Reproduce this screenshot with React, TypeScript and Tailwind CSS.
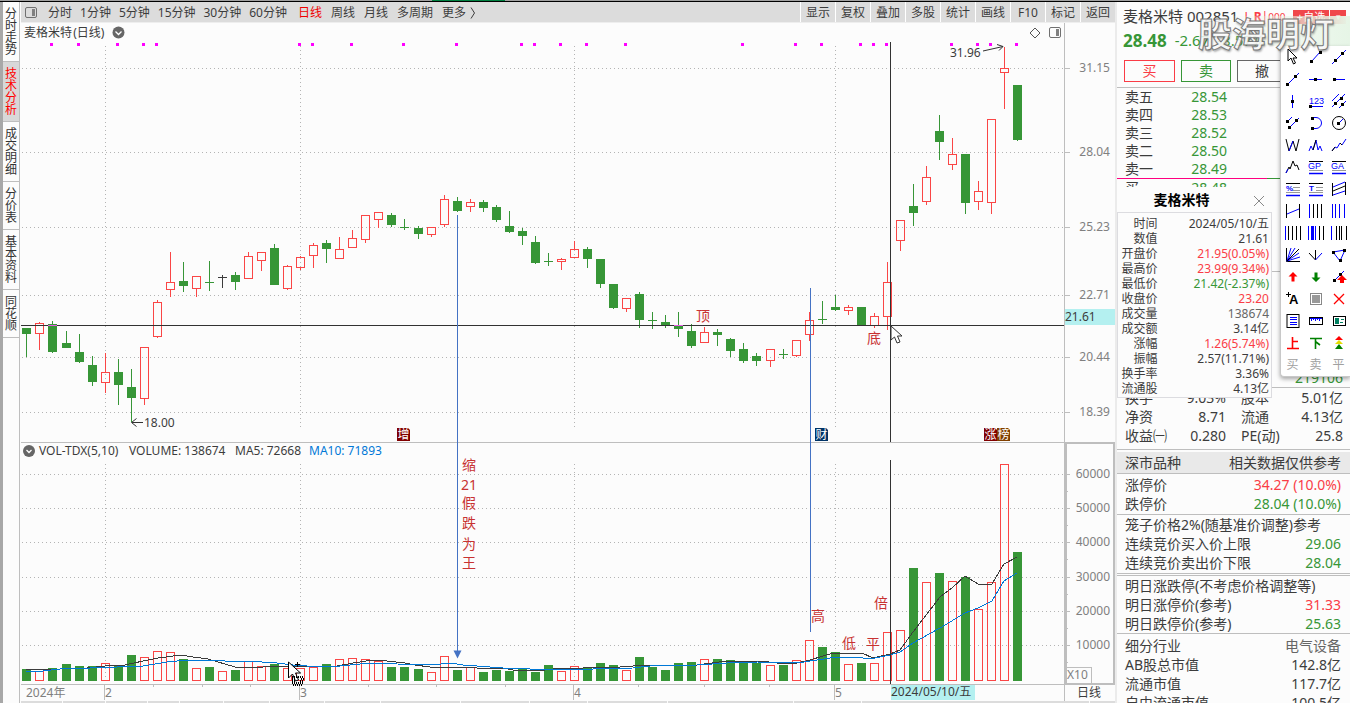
import React from "react";

type Kind = "r" | "g" | "k";
// [centre x, body top, body bottom, high, low, kind, volume top]
type Bar = [number, number, number, number, number, Kind, number];

const bars: Bar[] = [
  [26, 328, 334, 328, 357, "g", 669],
  [39, 323, 334, 322, 350, "r", 671],
  [52, 324, 352, 321, 353, "g", 668],
  [66, 343, 348, 331, 348, "g", 664],
  [79, 352, 362, 334, 363, "g", 666],
  [92, 365, 382, 356, 386, "g", 666],
  [105, 372, 383, 353, 393, "r", 663],
  [118, 372, 385, 359, 405, "g", 665],
  [131, 387, 398, 369, 422, "g", 655],
  [144, 347, 399, 347, 405, "r", 657],
  [157, 302, 337, 300, 338, "r", 651],
  [170, 282, 290, 252, 297, "r", 652],
  [183, 281, 286, 262, 292, "g", 659],
  [196, 276, 289, 276, 297, "r", 668],
  [209, 282, 283, 261, 291, "g", 667],
  [222, 277, 278, 275, 288, "k", 671],
  [235, 275, 282, 272, 290, "g", 670],
  [248, 256, 279, 252, 279, "r", 661],
  [261, 252, 261, 252, 271, "r", 666],
  [274, 248, 285, 244, 285, "g", 664],
  [287, 266, 289, 265, 290, "r", 668],
  [300, 257, 268, 256, 270, "r", 668],
  [313, 245, 256, 243, 268, "r", 667],
  [326, 243, 249, 240, 263, "g", 664],
  [339, 249, 259, 237, 259, "r", 659],
  [352, 238, 248, 230, 248, "r", 658],
  [365, 215, 240, 215, 243, "r", 659],
  [378, 212, 220, 212, 228, "r", 661],
  [391, 215, 225, 213, 227, "g", 667],
  [404, 227, 228, 219, 230, "g", 667],
  [418, 228, 234, 226, 239, "g", 669],
  [431, 227, 235, 227, 237, "r", 672],
  [444, 199, 225, 195, 227, "r", 656],
  [457, 201, 211, 197, 212, "g", 670],
  [470, 202, 207, 199, 212, "r", 667],
  [483, 202, 208, 200, 212, "g", 672],
  [496, 207, 220, 205, 222, "g", 670],
  [509, 226, 232, 211, 233, "g", 671],
  [522, 231, 236, 228, 245, "g", 669],
  [535, 242, 263, 236, 264, "g", 672],
  [548, 261, 262, 253, 266, "g", 665],
  [561, 259, 262, 258, 270, "r", 671],
  [574, 249, 258, 241, 258, "r", 666],
  [587, 249, 259, 247, 268, "g", 667],
  [600, 259, 284, 259, 288, "g", 663],
  [613, 284, 308, 284, 309, "g", 665],
  [626, 298, 309, 298, 312, "r", 670],
  [639, 294, 320, 292, 328, "g", 657],
  [652, 320, 321, 312, 329, "g", 667],
  [665, 322, 326, 315, 328, "g", 670],
  [678, 325, 329, 312, 337, "g", 663],
  [691, 331, 346, 324, 348, "g", 662],
  [704, 332, 343, 327, 343, "r", 659],
  [717, 332, 335, 329, 346, "g", 659],
  [730, 339, 351, 338, 357, "g", 660],
  [743, 349, 361, 343, 363, "g", 663],
  [756, 356, 361, 353, 366, "g", 663],
  [770, 349, 361, 349, 367, "r", 665],
  [783, 354, 355, 349, 359, "g", 665],
  [796, 340, 356, 340, 357, "r", 660],
  [809, 320, 335, 312, 341, "r", 640],
  [822, 319, 320, 301, 324, "g", 647],
  [835, 307, 310, 295, 311, "g", 652],
  [848, 307, 311, 305, 315, "r", 664],
  [861, 307, 325, 307, 326, "g", 663],
  [874, 316, 326, 313, 328, "r", 663],
  [887, 282, 317, 262, 330, "r", 632],
  [900, 220, 241, 220, 251, "r", 630],
  [913, 206, 213, 184, 226, "g", 568],
  [926, 177, 202, 166, 205, "r", 582],
  [939, 131, 142, 115, 160, "g", 573],
  [952, 154, 165, 138, 170, "r", 581],
  [965, 154, 203, 154, 214, "g", 577],
  [978, 191, 202, 181, 210, "r", 609],
  [991, 119, 203, 119, 214, "r", 582],
  [1004, 68, 73, 47, 109, "r", 464],
  [1017, 85, 140, 85, 141, "g", 552],
];

const colors: Record<Kind, string> = { r: "#fa4646", g: "#379637", k: "#3c3c3c" };
const VOL_BASE = 681;

const signalDots = [50, 77, 116, 142, 155, 298, 311, 350, 402, 455, 520, 533, 559, 585, 624, 741, 794, 820, 859, 872, 885, 950, 976, 989, 1015];
const priceTicks: [number, string][] = [[68, "31.15"], [152, "28.04"], [227, "25.23"], [295, "22.71"], [357, "20.44"], [412, "18.39"]];
const volumeTicks: [number, string][] = [[474, "60000"], [508, "50000"], [542, "40000"], [577, "30000"], [611, "20000"], [645, "10000"]];
const months: [number, string][] = [[105, "2"], [300, "3"], [574, "4"], [835, "5"]];
const weekTicks = [153, 202, 250, 368, 436, 505, 638, 704, 769];

const ma5 =
  "26,669 45,670 60,669 87,668 105,666 125,665 143,661 158,658 181,655 193,657 208,659 235,667 263,667 287,666 317,667 337,666 353,663 373,660 387,661 405,663 415,665 430,667 450,667 477,668 503,668 513,670 537,671 553,669 583,668 597,667 620,667 647,665 663,666 697,665 727,661 760,661 777,663 797,663 810,660 823,656 833,653 862,653 873,658 890,654 900,650 913,632 940,597 952,588 965,576 978,584 992,584 1004,564 1017,557";
const ma10 =
  "26,672 43,671 60,669 90,668 117,667 143,666 167,662 187,660 217,660 233,662 247,661 277,663 293,665 320,667 340,666 370,663 397,664 433,665 450,663 463,665 490,667 503,668 530,669 593,669 633,668 650,666 697,665 727,663 757,662 797,663 817,660 837,657 863,658 875,658 890,655 900,652 913,643 940,628 965,613 978,608 992,601 1004,581 1017,573";

const notes: [number, number, string][] = [
  [703, 321, "顶"], [874, 343, "底"], [818, 621, "高"], [849, 648, "低"], [873, 649, "平"], [881, 608, "倍"],
  [469, 470, "缩"], [469, 490, "21"], [469, 508, "假"], [469, 528, "跌"], [469, 549, "为"], [469, 568, "王"],
];
const tags: [number, string, string][] = [[397, "增", "#800000"], [815, "财", "#003366"], [984, "涨", "#800000"], [997, "榜", "#804000"]];

function StockChart() {
  return (
    <svg viewBox="21 42 1094 659" className="block h-auto w-full" role="img" aria-label="日线 K线图" fontSize="12">
      <g stroke="#b4b4b4" strokeDasharray="1 3" shapeRendering="crispEdges">
        {[...priceTicks, ...volumeTicks].map(([y]) => (
          <line key={y} x1="22" x2="1064" y1={y + 0.5} y2={y + 0.5} />
        ))}
        {months.map(([x]) => (
          <g key={x}>
            <line x1={x + 0.5} x2={x + 0.5} y1="46" y2="428" />
            <line x1={x + 0.5} x2={x + 0.5} y1="464" y2="681" />
          </g>
        ))}
      </g>
      <g shapeRendering="crispEdges" fill="none" stroke="#bebebe">
        <path d="M21 442.5H1115M1064.5 42V701M21 684.5H1115" />
        <rect x="1066" y="443" width="48" height="241" strokeWidth="2" />
        <path d="M1065 667.5H1091.5V683" />
        {priceTicks.map(([y]) => <path key={y} d={`M1065 ${y + 0.5}h5`} />)}
        {volumeTicks.map(([y]) => <path key={y} d={`M1066 ${y + 0.5}h4M1066 ${y + 17.5}h2`} />)}
        {months.map(([x]) => <path key={x} d={`M${x - 0.5} 685v15`} />)}
        {weekTicks.map((x) => <path key={x} d={`M${x + 0.5} 685v2`} />)}
      </g>
      <g shapeRendering="crispEdges">
        {signalDots.map((x) => <rect key={x} x={x} y="43" width="3" height="3" fill="#ff00ff" />)}
        {bars.map(([x, top, bottom, high, low, kind, vol]) => {
          const c = colors[kind];
          const volRed = kind !== "g";
          return (
            <g key={x} stroke={kind === "g" ? "none" : c}>
              <rect x={x} y={high} width="1" height={Math.max(0, (kind === "r" ? top : low) - high)} fill={c} stroke="none" />
              {kind === "r" ? (
                <>
                  <rect x={x} y={bottom} width="1" height={low - bottom} fill={c} stroke="none" />
                  <rect x={x - 3.5} y={top + 0.5} width="8" height={bottom - top - 1} fill="none" />
                </>
              ) : (
                <rect x={x - 4} y={top} width="9" height={bottom - top} fill={c} stroke="none" />
              )}
              {volRed ? (
                <rect x={x - 3.5} y={vol + 0.5} width="8" height={VOL_BASE - vol - 1} fill="none" stroke={colors.r} />
              ) : (
                <rect x={x - 4} y={vol} width="9" height={VOL_BASE - vol} fill={c} />
              )}
            </g>
          );
        })}
      </g>
      <g fill="none" shapeRendering="crispEdges">
        <polyline points={ma5} stroke="#3c3c3c" />
        <polyline points={ma10} stroke="#0078d7" />
        <path d="M21 325.5H1064M890.5 42V442M890.5 460V684" stroke="#323232" />
        <path d="M48 325.5h9M674 325.5h9" stroke="#e65ae6" />
        <path d="M457.5 215V652M810.5 288V632" stroke="#4472c4" />
      </g>
      <path d="M453.500 650.500h8l-4 8z" fill="#4472c4" />
      <g fill="none" stroke="#323232">
        <path d="M983 51L1003 46.500M997 44.500L1003 46.500L999 50.500" />
        <path d="M143 422.500H132M136.500 418.500L131.500 422.500L136.500 426.500" />
      </g>
      <rect x="1065" y="309" width="50" height="16" fill="#b4f0f0" />
      <rect x="891" y="685" width="84" height="15" fill="#b4f0f0" />
      <g fill="#3c3c3c">
        <text x="1065" y="321">21.61</text>
        <text x="891" y="696">2024/05/10/五</text>
        <text x="1077" y="697">日线</text>
        <text x="950" y="57">31.96</text>
        <text x="144" y="427">18.00</text>
        <text x="39" y="455">VOL-TDX(5,10)</text>
        <text x="129" y="455">VOLUME: 138674</text>
        <text x="235" y="455">MA5: 72668</text>
        <text x="309" y="455" fill="#0078d7">MA10: 71893</text>
      </g>
      <g fill="#808080">
        {[...priceTicks, ...volumeTicks].map(([y, label]) => (
          <text key={label} x="1110" y={y + 4} textAnchor="end">{label}</text>
        ))}
        <text x="1067" y="679">X10</text>
        <text x="26" y="697">2024年</text>
        {months.map(([x, label]) => <text key={x} x={x} y="697">{label}</text>)}
      </g>
      <circle cx="29" cy="451" r="6" fill="#666" />
      <path d="M26.500 450l2.500 2.500l2.500 -2.500" fill="none" stroke="#fff" strokeWidth="1.300" />
      <g fill="#c83232" fontSize="14" textAnchor="middle">
        {notes.map(([x, y, t]) => <text key={t} x={x} y={y}>{t}</text>)}
      </g>
      {tags.map(([x, t, fill]) => (
        <g key={t}>
          <path d={`M${x} 428h11l2 2v11h-13z`} fill={fill} />
          <text x={x + 6.5} y="439" fontSize="12" fill="#fff" textAnchor="middle">{t}</text>
        </g>
      ))}
      <path d="M891 326v14l3.500 -3l2.500 6l3 -1l-2.500 -6h4.500z" fill="#fff" stroke="#333" />
      <g>
        <path d="M288.500 662v16l4 -4l3 7l3 -1l-3 -7h5z" fill="#fff" stroke="#000" />
        <path d="M297.500 662v5M295 664.500h5" stroke="#000" />
        <path d="M292 677h12M292 679h3M301 679h3M292 681h4M300 681h4M292 683h12M293 685h10" fill="none" stroke="#000" strokeDasharray="1 1" strokeWidth="2" />
      </g>
    </svg>
  );
}

const periodsShort = ["分时", "1分钟", "5分钟", "15分钟", "30分钟", "60分钟"];
const periodsLong = ["日线", "周线", "月线", "多周期", "更多"];
const actions = ["显示", "复权", "叠加", "多股", "统计", "画线", "F10", "标记", "返回"];
const sideTabs = ["分时走势", "技术分析", "成交明细", "分价表", "基本资料", "同花顺"];
const bottomTabs = [42, 42, 42, 31, 44, 45, 55, 56, 80, 69, 58, 80, 127, 67, 231, 25];

function PanelIcon() {
  return (
    <svg width="13" height="11" viewBox="0 0 13 11" aria-hidden="true">
      <rect x="0.500" y="0.500" width="11" height="10" rx="1.500" fill="none" stroke="#707070" />
      <rect x="7" y="2" width="3" height="7" fill="#808080" />
    </svg>
  );
}

function Toolbar() {
  return (
    <nav className="flex h-5 items-stretch bg-[#dcdcdc] text-xs leading-[22px] text-[#3c3c3c]">
      <button className="flex w-[27px] items-center pl-1" aria-label="侧栏"><PanelIcon /></button>
      <div className="flex gap-2">
        {periodsShort.map((p) => <button key={p}>{p}</button>)}
      </div>
      <div className="ml-[11px] flex gap-[9px]">
        {periodsLong.map((p) => (
          <button key={p} className={p === "日线" ? "text-[#f00000]" : ""}>{p}</button>
        ))}
      </div>
      <svg className="ml-1 mt-1" width="6" height="14" viewBox="0 0 6 14" fill="none" stroke="#3c3c3c" aria-hidden="true">
        <path d="M1 1.500L4.500 7L1 12.500" />
      </svg>
      <div className="ml-auto flex">
        {actions.map((a) => (
          <button key={a} className="w-[35px] border-l border-white">{a}</button>
        ))}
      </div>
    </nav>
  );
}

function ChartColumn() {
  return (
    <main className="flex min-w-0 flex-1 flex-col">
      <Toolbar />
      <div className="flex h-5 border-t border-[#eeeeee] text-xs text-[#3c3c3c]">
        <div className="flex flex-1 items-center gap-2 pl-[3px]">
          <h1 className="leading-5">麦格米特<span>&#8202;(日线)</span></h1>
          <button aria-label="展开">
            <svg width="13" height="13" viewBox="0 0 13 13">
              <circle cx="6.500" cy="6.500" r="6" fill="#666" />
              <path d="M3.500 5.500l3 3l3 -3" fill="none" stroke="#fff" strokeWidth="1.300" />
            </svg>
          </button>
          <button className="ml-auto" aria-label="标记点">
            <svg width="12" height="12" viewBox="0 0 12 12"><path d="M6 1l5 5l-5 5l-5 -5z" fill="none" stroke="#555" /></svg>
          </button>
          <button className="pr-[2px]" aria-label="面板"><PanelIcon /></button>
        </div>
        <div className="w-[51px] border-l border-[#bebebe]" />
      </div>
      <StockChart />
      <div className="flex h-[2px] gap-px">
        {bottomTabs.map((w, i) => <span key={i} className="bg-[#dcdcdc]" style={{ flexGrow: w }} />)}
      </div>
    </main>
  );
}

const K = "#000";
const B = "#0000ff";
const dot = (x: number, y: number) => <rect x={x - 1} y={y - 1} width="3" height="3" fill={K} />;
const vlines = (xs: [number, string, number?][]) => (
  <>{xs.map(([x, c, w], i) => <rect key={i} x={x} y="1" width={w ?? 1} height="14" fill={c} />)}</>
);
const textLines = (label: string) => (
  <>
    <path d="M1 2.500h14" stroke={K} />
    <path d="M1 14.500h14" stroke={B} strokeWidth="1.500" />
    {label.length === 2 ? (
      <>
        <path d="M1 11.500h14" stroke="#999" />
        <text x="0" y="10" fontSize="9" fill={B}>{label}</text>
      </>
    ) : (
      <>
        <path d="M8 6.500h7M8 9.500h7M1 11.500h14" stroke="#999" />
        <text x="1" y="10" fontSize="8" fontWeight="bold" fill={B}>{label}</text>
      </>
    )}
  </>
);

const tools: [string, React.ReactNode][] = [
  ["选择", <path d="M3 0v12l3 -3l2.500 6l2 -1l-2.500 -5h4z" fill="#fff" stroke={K} />],
  ["线段", <><path d="M4 12L12 3" stroke={B} />{dot(3, 12)}{dot(12, 3)}</>],
  ["直线", <><path d="M1 15L15 1" stroke={B} />{dot(4, 11)}{dot(11, 4)}</>],
  ["射线", <><path d="M1 15L14 2" stroke={B} />{dot(2, 13)}{dot(10, 5)}</>],
  ["水平线", <><path d="M1 8.500h13" stroke={B} />{dot(7, 8)}</>],
  ["水平射线", <><path d="M2 8.500h12" stroke={B} />{dot(3, 8)}</>],
  ["垂直线", <><path d="M7.500 2v13" stroke={B} />{dot(7, 8)}</>],
  ["价格标注", <><text x="1" y="11" fontSize="9" fill={B}>123</text><path d="M2 13.500h13" stroke={B} />{dot(2, 13)}</>],
  ["平行线组", <><path d="M1 8L8 1M1 14L14 1M8 15L15 8" stroke={B} />{dot(4, 10)}{dot(10, 5)}{dot(11, 11)}</>],
  ["平行线", <><path d="M2 7L7 2M3 14L14 3" stroke={B} />{dot(2, 6)}{dot(4, 12)}{dot(11, 5)}</>],
  ["圆弧", <><path d="M5 2.500h3a5.500 5.500 0 0 1 0 11h-3" fill="none" stroke={B} />{dot(4, 3)}{dot(4, 13)}</>],
  ["圆", <><circle cx="8" cy="8" r="6.500" fill="none" stroke={K} /><path d="M8 8L12 4" stroke={B} />{dot(7, 8)}</>],
  ["W形", <><path d="M1 2l3 12l4 -10l3 10l3 -12" fill="none" stroke={K} /><path d="M4 14l4 -10" stroke={B} /></>],
  ["头肩", <><path d="M1 14l2 -5l2 4l3 -10l2 10l2 -4l2 5" fill="none" stroke={B} /><path d="M5 13l3 -10" stroke={K} /></>],
  ["上升浪", <><path d="M1 14l3 -4l2 1l3 -5l2 2l4 -6" fill="none" stroke={B} /><path d="M1 14l3 -4M9 6l2 2" stroke={K} /></>],
  ["波浪", <><path d="M1 14l3 -6l1 2l3 -8l2 5l2 -1l2 5" fill="none" stroke={K} /><path d="M1 14l2 -4" stroke={B} /></>],
  ["黄金价格", textLines("GP")],
  ["黄金目标", textLines("GA")],
  ["百分比", textLines("%")],
  ["目标线", textLines("T")],
  ["通道", <><path d="M1.500 2v13M14.500 1v13" stroke={K} /><path d="M2 6L14 1M2 14L14 10" stroke={B} /><path d="M2 10L14 5" stroke={K} /></>],
  ["折返", <><path d="M1.500 1v14M14.500 1v14" stroke={K} /><path d="M2 11L14 6" stroke={B} /></>],
  ["等距线", vlines([[1, B], [5, K], [9, K], [13, K]])],
  ["周期线", vlines([[1, B], [4, B], [8, B], [13, B]])],
  ["自由周期", vlines([[0, B], [3, K], [7, K], [11, K], [15, K]])],
  ["斐波周期", vlines([[0, B], [3, B, 3], [7, B], [11, K], [15, K]])],
  ["卢卡斯", vlines([[0, B], [5, K], [8, K], [10, K], [15, K]])],
  ["甘氏线", <><path d="M1.500 1v13.500H15" fill="none" stroke={K} /><path d="M2 14L6 1M2 14L10 1M2 14L14 6M2 14L15 10" stroke={B} /><path d="M2 14L14 2" stroke={K} /></>],
  ["扇形", <><path d="M7.500 3v10M1 6l6.500 7" stroke={K} /><path d="M7.500 13L14 6" stroke={B} /></>],
  ["三角形", <><path d="M2 5L14 3L9 14z" fill="none" stroke={B} />{dot(2, 5)}{dot(13, 3)}{dot(9, 13)}</>],
  ["上箭头", <path d="M8 3l4.500 4.500h-3v5h-3v-5h-3z" fill="#f00" />],
  ["下箭头", <path d="M8 13l4.500 -4.500h-3v-5h-3v5h-3z" fill="#008000" />],
  ["箭头线", <><path d="M2 13L13 2" stroke={B} />{dot(3, 11)}{dot(9, 5)}<path d="M11 6l5 5h-3v3h-4v-3h-3z" fill="#f00" /></>],
  ["文字", <><text x="4" y="13" fontSize="13" fontWeight="bold" fill={K}>A</text><path d="M3.500 1v5M1 3.500h5" stroke={K} /></>],
  ["矩形", <><rect x="2.500" y="2.500" width="11" height="11" fill="#fff" stroke="#888" /><rect x="4" y="4" width="8" height="8" fill="#999" /></>],
  ["删除", <path d="M3 3L13 13M13 3L3 13" stroke="#f00" strokeWidth="1.300" />],
  ["列表", <><rect x="2" y="1.500" width="12" height="13" fill="#fff" stroke={K} /><path d="M5 4.500h7M5 6.500h7M5 9.500h7M5 11.500h7" stroke={B} /></>],
  ["标尺", <><rect x="1.500" y="4.500" width="13" height="7" fill="#fff" stroke={K} /><path d="M3.500 5v3M5.500 5v2M7.500 5v3M9.500 5v2M11.500 5v3M2 5.500h12" stroke={B} /></>],
  ["图片", <><rect x="2.500" y="3.500" width="12" height="9" fill="#fff" stroke={K} /><rect x="4" y="5" width="4" height="6" fill="#008060" /><path d="M10 6.500h3M9 9.500h3" stroke="#008060" /></>],
  ["涨标", <path d="M7.500 2v11M8 6.500h5M2 13.500h12" stroke="#f00" strokeWidth="1.600" />],
  ["跌标", <path d="M2 3.500h12M7.500 4v10M8 7l4 3" stroke="#008000" strokeWidth="1.600" fill="none" />],
  ["信号", <><path d="M8 1l4 4h-8z" fill="#f00" /><path d="M8 5l4 4h-8z" fill="#e6dc00" /><path d="M8 9l4 5h-8z" fill="#008000" /></>],
];

function DrawPalette() {
  return (
    <div className="absolute right-0 top-[46px] z-20 grid w-[70px] grid-cols-[repeat(3,23px)] auto-rows-[22px] rounded-bl-[4px] border-b border-l border-[#c8c8c8] bg-white shadow-[0_2px_4px_rgba(0,0,0,0.35)]">
      {tools.map(([name, art]) => (
        <button key={name} aria-label={name} className="flex items-center justify-center">
          <svg width="16" height="16" viewBox="0 0 16 16" fontFamily="Liberation Sans, sans-serif">{art}</svg>
        </button>
      ))}
      {["买", "卖", "平"].map((t) => (
        <button key={t} className="text-xs leading-[22px] text-[#a0a0a0]">{t}</button>
      ))}
    </div>
  );
}

const R = "text-[#fa3c46]";
const G = "text-[#379637]";
const D = "text-[#3c3c3c]";

const infoRows: [string, string, string][] = [
  ["时间", "2024/05/10/五", D],
  ["数值", "21.61", D],
  ["开盘价", "21.95(0.05%)", R],
  ["最高价", "23.99(9.34%)", R],
  ["最低价", "21.42(-2.37%)", G],
  ["收盘价", "23.20", R],
  ["成交量", "138674", "text-[#666]"],
  ["成交额", "3.14亿", D],
  ["涨幅", "1.26(5.74%)", R],
  ["振幅", "2.57(11.71%)", D],
  ["换手率", "3.36%", D],
  ["流通股", "4.13亿", D],
];

function InfoPopup() {
  return (
    <section className="absolute left-0 top-[187px] z-10 w-[155px] bg-[#fcfcfc]">
      <header className="relative flex h-[25px] items-center justify-center pr-[26px] text-sm font-bold text-black">
        <h2>麦格米特</h2>
        <button aria-label="关闭" className="absolute right-[7px] top-2">
          <svg width="12" height="12" viewBox="0 0 12 12"><path d="M1 1L11 11M11 1L1 11" stroke="#888" /></svg>
        </button>
      </header>
      <table className="w-full border border-[#dcdce0] text-xs leading-[15px]">
        <tbody>
          <tr className="h-[3px]" />
          {infoRows.map(([k, v, c]) => (
            <tr key={k}>
              <th scope="row" className="w-10 p-0 text-right font-normal text-[#3c3c3c]">{k}</th>
              <td className={"p-0 pr-[2px] text-right " + c}>{v}</td>
            </tr>
          ))}
          <tr className="h-[2px]" />
        </tbody>
      </table>
    </section>
  );
}

const asks: [string, string][] = [["卖五", "28.54"], ["卖四", "28.53"], ["卖三", "28.52"], ["卖二", "28.50"], ["卖一", "28.49"]];

function Level({ k, v }: { k: string; v: string }) {
  return (
    <div className="flex h-[18px] items-center pl-2 leading-[18px]">
      <span className="w-[42px]">{k}</span>
      <span className={"w-[60px] text-right " + G}>{v}</span>
    </div>
  );
}

function Quad({ a, b, c, d }: { a: string; b: string; c: string; d: string }) {
  return (
    <div className="flex h-[19px] items-center pl-2 pr-[7px] leading-[19px]">
      <span className="w-[50px] whitespace-nowrap">{a}</span>
      <span className="w-[51px] text-right">{b}</span>
      <span className="ml-[15px]">{c}</span>
      <span className="ml-auto">{d}</span>
    </div>
  );
}

function Pair({ k, v, c = D }: { k: string; v?: string; c?: string }) {
  return (
    <div className="flex h-[19px] items-center justify-between whitespace-nowrap pl-2 pr-[9px] leading-[19px]">
      <span>{k}</span>
      {v && <span className={c}>{v}</span>}
    </div>
  );
}

function QuotePanel() {
  return (
    <aside className="flex w-[233px] shrink-0 flex-col overflow-hidden bg-[#fcfcfc] text-sm text-[#3c3c3c] [&>*]:shrink-0">
      <div className="flex h-[30px] items-center pl-[6px] text-[15px]">
        <h2>麦格米特 002851</h2>
        <span className={"ml-[6px] flex gap-[3px] text-xs leading-4 " + R}>
          <span className="underline">L</span><span><b>R</b>|<span className="text-[10px]">000</span></span>
        </span>
        <button className="ml-auto h-[14px] w-9 bg-[#f0464b] text-[11px] leading-[14px] text-white">+自选</button>
        <button className="ml-px mr-[4px] h-[14px] w-4 bg-[#f0464b] text-[9px] leading-[14px] text-white" aria-label="更多自选">▾</button>
      </div>
      <div className={"flex h-[22px] items-center pb-1 pl-[6px] text-[15px] " + G}>
        <strong className="text-[17px]">28.48</strong>
        <span className="ml-2">-2.67</span>
        <span className="ml-2">-8.57%</span>
      </div>
      <div className="flex h-[34px] gap-[6px] border-b border-[#bebebe] pl-[7px] pt-[6px]">
        <button className={"h-[22px] w-[51px] border border-current text-sm leading-5 " + R}>买</button>
        <button className={"h-[22px] w-[50px] border border-current text-sm leading-5 " + G}>卖</button>
        <button className="h-[22px] w-[50px] border border-[#666] text-sm leading-5">撤</button>
      </div>
      {asks.map(([k, v]) => <Level key={k} k={k} v={v} />)}
      <div className="flex h-px">
        <span className="w-[150px] bg-[#ff0080]" />
        <span className="flex-1 bg-[#379637]" />
      </div>
      <Level k="买一" v="28.48" />
      <div className="h-[75px] border-b border-[#bebebe]" />
      <div className="flex h-[116px] items-end justify-end border-b border-[#bebebe] pr-[7px]">
        <span className={"leading-[19px] " + G}>219106</span>
      </div>
      <div className="border-b border-[#bebebe] pb-1">
        <Quad a="换手" b="9.03%" c="股本" d="5.01亿" />
        <Quad a="净资" b="8.71" c="流通" d="4.13亿" />
        <Quad a="收益㈠" b="0.280" c="PE(动)" d="25.8" />
      </div>
      <div className="mt-[2px] border-b border-[#bebebe] bg-[#e9e9e9] py-px">
        <Pair k="深市品种" v="相关数据仅供参考" />
      </div>
      <div className="border-b border-[#bebebe] pb-px pt-px">
        <Pair k="涨停价" v="34.27 (10.0%)" c={R} />
        <Pair k="跌停价" v="28.04 (10.0%)" c={G} />
      </div>
      <div className="border-b border-[#bebebe] pb-px">
        <Pair k="笼子价格2%(随基准价调整)参考" />
        <Pair k="连续竞价买入价上限" v="29.06" c={G} />
        <Pair k="连续竞价卖出价下限" v="28.04" c={G} />
      </div>
      <div className="mt-px border-y border-[#bebebe]">
        <Pair k="明日涨跌停(不考虑价格调整等)" />
        <Pair k="明日涨停价(参考)" v="31.33" c={R} />
        <Pair k="明日跌停价(参考)" v="25.63" c={G} />
      </div>
      <div className="pt-[2px]">
        <Pair k="细分行业" v="电气设备" c="text-[#666]" />
        <Pair k="AB股总市值" v="142.8亿" />
        <Pair k="流通市值" v="117.7亿" />
        <Pair k="自由流通市值" v="100.5亿" />
      </div>
    </aside>
  );
}

export default function App() {
  return (
    <div
      className="flex h-screen flex-col overflow-hidden bg-[#fcfcfc]"
      style={{ fontFamily: '"Noto Sans", "Noto Sans CJK SC", sans-serif' }}
    >
      <div className="flex h-[2px] shrink-0 border-b border-black bg-[#a0a0a0]">
        <span className="ml-[32%] w-[73px] bg-[#008040]" />
      </div>
      <div className="flex min-h-0 flex-1">
        <nav className="flex w-[21px] shrink-0 flex-col border-l-[3px] border-[#a8a8a8] pr-px">
          <div className="flex flex-1 flex-col border-r border-[#bebebe]">
            {sideTabs.map((t) => (
              <button
                key={t}
                className={
                  "flex flex-col items-center border-b border-[#bebebe] pb-[5px] pt-[6px] text-xs leading-3 " +
                  (t === "技术分析" ? "bg-[#d8d8d8] text-[#f00]" : "text-[#333]")
                }
              >
                {t.split("").map((ch) => <span key={ch}>{ch}</span>)}
              </button>
            ))}
          </div>
        </nav>
        <ChartColumn />
        <div className="w-[2px] shrink-0 bg-[#ebebeb]" />
        <QuotePanel />
      </div>
      <div className="absolute right-0 top-0 w-[233px]">
        <InfoPopup />
        <div className="absolute right-0 top-4 z-10 h-[30px] w-[130px] bg-gradient-to-r from-transparent to-[#e6f5e6]" />
        <DrawPalette />
        <div className="pointer-events-none absolute left-[81px] top-[11px] z-30 whitespace-nowrap text-[34px] font-bold leading-[46px] text-white/85 [-webkit-text-stroke:1px_#777] [text-shadow:1px_2px_2px_rgba(0,0,0,0.3)]">
          股海明灯
        </div>
      </div>
    </div>
  );
}
